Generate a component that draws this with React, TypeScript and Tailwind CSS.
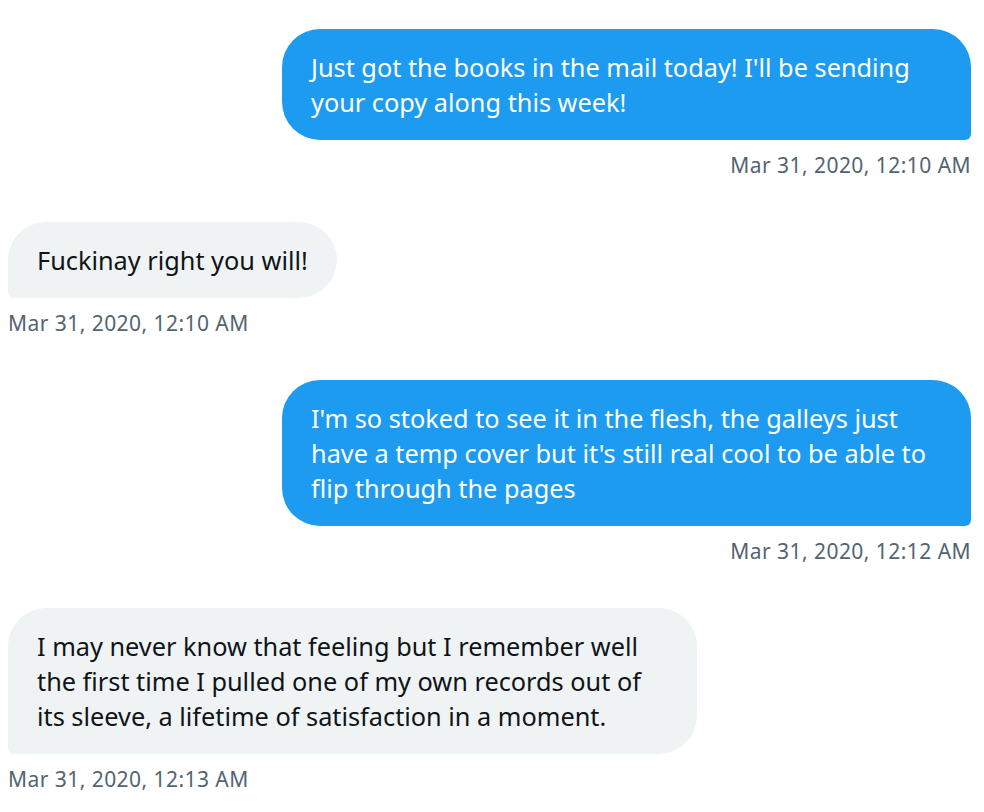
import React from "react";

type Message = {
  id: number;
  text: string;
  time: string;
  mine: boolean;
};

const messages: Message[] = [
  {
    id: 1,
    text: "Just got the books in the mail today! I'll be sending your copy along this week!",
    time: "Mar 31, 2020, 12:10 AM",
    mine: true,
  },
  {
    id: 2,
    text: "Fuckinay right you will!",
    time: "Mar 31, 2020, 12:10 AM",
    mine: false,
  },
  {
    id: 3,
    text: "I'm so stoked to see it in the flesh, the galleys just have a temp cover but it's still real cool to be able to flip through the pages",
    time: "Mar 31, 2020, 12:12 AM",
    mine: true,
  },
  {
    id: 4,
    text: "I may never know that feeling but I remember well the first time I pulled one of my own records out of its sleeve, a lifetime of satisfaction in a moment.",
    time: "Mar 31, 2020, 12:13 AM",
    mine: false,
  },
];

function MessageItem({ message }: { message: Message }) {
  const { mine } = message;
  return (
    <div className={`flex flex-col ${mine ? "items-end" : "items-start"}`}>
      <div
        className={`max-w-[689px] px-[29px] py-[20.5px] text-[25.3px] leading-[35px] ${
          mine
            ? "rounded-[38px] rounded-br-[6px] bg-[#1d9bf0] text-white"
            : "rounded-[38px] rounded-bl-[6px] bg-[#eff3f4] text-[#0f1419]"
        }`}
      >
        {message.text}
      </div>
      <div className="mt-[11px] text-[21px] leading-[28px] tracking-[0.45px] text-[#536471]">
        {message.time}
      </div>
    </div>
  );
}

export default function App() {
  return (
    <div
      className="min-h-screen bg-white pt-[29px] pl-2 pr-[13px]"
      style={{ fontFamily: '"Noto Sans", "Open Sans", sans-serif' }}
    >
      <div className="flex flex-col gap-[43px]">
        {messages.map((m) => (
          <MessageItem key={m.id} message={m} />
        ))}
      </div>
    </div>
  );
}
